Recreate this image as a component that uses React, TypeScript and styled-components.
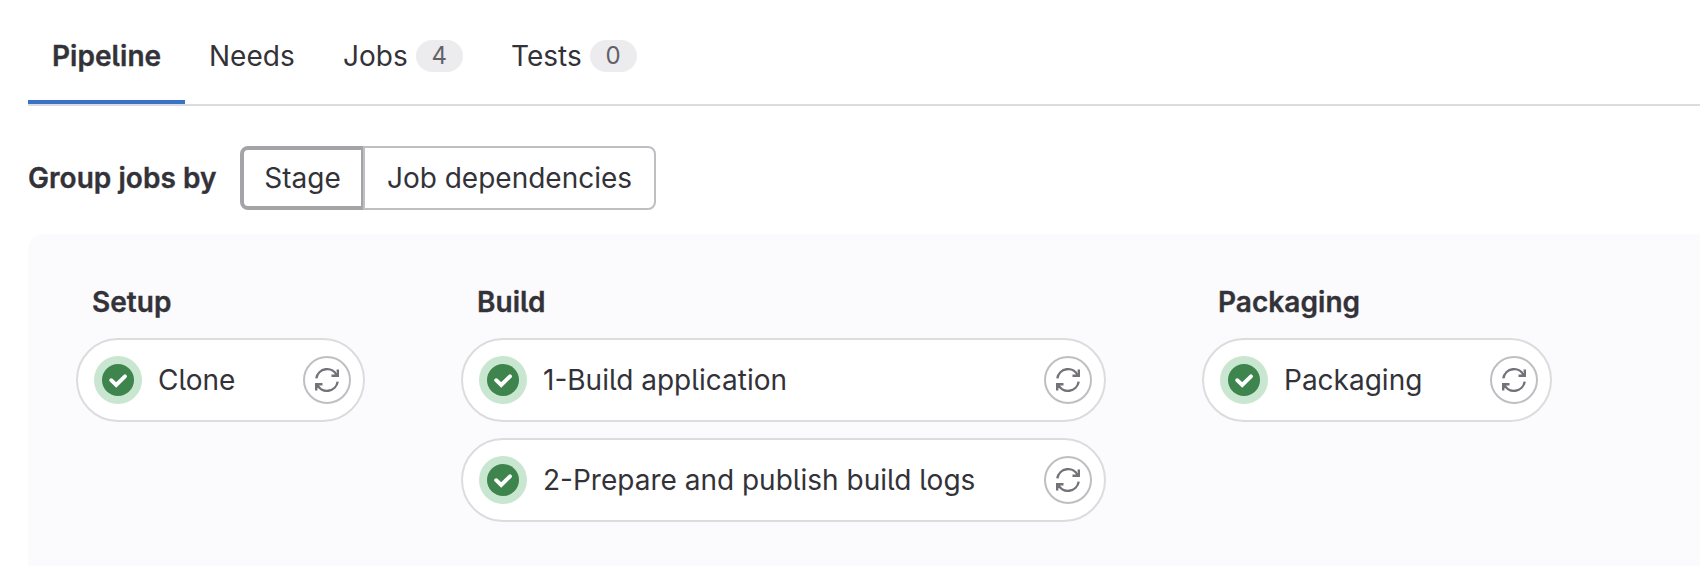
import React from 'react';
import styled, { createGlobalStyle } from 'styled-components';

const GlobalStyle = createGlobalStyle`
  * { box-sizing: border-box; }
  html, body { margin: 0; background: #fff; overflow: hidden; }
  body {
    font-family: Inter, "Liberation Sans", sans-serif;
    font-size: 28px;
    line-height: 40px;
    color: #333238;
    font-feature-settings: "cv05";
  }
  button { font: inherit; color: inherit; font-feature-settings: inherit; }
`;

const Page = styled.main`
  width: 1700px;
  height: 566px;
  overflow: hidden;
  display: flex;
  flex-direction: column;
  padding-left: 28px;
`;

const TabList = styled.nav`
  flex: none;
  display: flex;
  height: 106px;
  padding-top: 12px;
  border-bottom: 2px solid #dcdcde;
`;

const Tab = styled.a<{ $active?: boolean; $width: number }>`
  display: flex;
  align-items: center;
  gap: 8px;
  width: ${p => p.$width}px;
  padding: 0 0 0 24px;
  white-space: nowrap;
  font-weight: ${p => (p.$active ? 600 : 400)};
  letter-spacing: ${p => (p.$active ? '0.05px' : 'normal')};
  -webkit-text-stroke: ${p => (p.$active ? '0.35px' : '0')};
  border-bottom: 4px solid ${p => (p.$active ? '#3a72c8' : 'transparent')};
`;

const Badge = styled.span`
  width: 47px;
  height: 32px;
  border-radius: 16px;
  background: #ececef;
  color: #626168;
  font-size: 24px;
  line-height: 32px;
  text-align: center;
`;

const GroupRow = styled.div`
  flex: none;
  display: flex;
  align-items: center;
  height: 64px;
  margin-top: 40px;
`;

const GroupLabel = styled.span`
  width: 212px;
  font-weight: 600;
  letter-spacing: 0.05px;
  -webkit-text-stroke: 0.35px;
  white-space: nowrap;
`;

const Segment = styled.button<{ $selected?: boolean; $width: number }>`
  width: ${p => p.$width}px;
  height: 64px;
  padding: 0;
  background: #fff;
  white-space: nowrap;
  border: ${p => (p.$selected ? '4px solid #a4a3a8' : '2px solid #bfbfc3')};
  border-right-width: 2px;
  border-radius: ${p => (p.$selected ? '8px 0 0 8px' : '0 8px 8px 0')};
`;

const Graph = styled.section`
  flex: 1;
  display: flex;
  gap: 96px;
  margin-top: 24px;
  padding: 48px 0 0 48px;
  border-top-left-radius: 16px;
  background: #fbfafd;
`;

const Stage = styled.div<{ $width: number }>`
  flex: none;
  display: flex;
  flex-direction: column;
  gap: 16px;
  width: ${p => p.$width}px;
`;

const StageTitle = styled.h2`
  margin: 0;
  padding-left: 16px;
  font-size: 28px;
  line-height: 40px;
  font-weight: 600;
  letter-spacing: 0.05px;
  -webkit-text-stroke: 0.35px;
`;

const Job = styled.div`
  display: flex;
  align-items: center;
  height: 84px;
  padding: 0 12px 0 16px;
  border: 2px solid #dcdcde;
  border-radius: 42px;
  background: #fff;
`;

const JobName = styled.span`
  flex: 1;
  padding-left: 16px;
  white-space: nowrap;
`;

const Retry = styled.button`
  display: grid;
  place-items: center;
  width: 48px;
  height: 48px;
  padding: 0;
  border: 2px solid #bfbfc3;
  border-radius: 50%;
  background: #fff;
  color: #737278;
`;

const SuccessIcon = () => (
  <svg width="48" height="48" viewBox="0 0 48 48">
    <circle cx="24" cy="24" r="24" fill="#c9e6d0" />
    <circle cx="24" cy="24" r="16" fill="#3d844d" />
    <path d="M17.2 24.2l5 4.8 8.8-8.7" fill="none" stroke="#fff" strokeWidth="3.9" strokeLinecap="round" />
  </svg>
);

const RetryIcon = () => (
  <svg width="24" height="24" viewBox="0 0 16 16" fill="none" stroke="currentColor" strokeWidth="1.6">
    <path d="M.88 6.9A7.2 7.2 0 0 1 14.63 5.2M15.2 1v4.2H11" />
    <path d="M15.12 9.1A7.2 7.2 0 0 1 1.37 10.8M.8 15v-4.2H5" />
  </svg>
);

const stages = [
  { name: 'Setup', width: 289, jobs: ['Clone'] },
  { name: 'Build', width: 645, jobs: ['1-Build application', '2-Prepare and publish build logs'] },
  { name: 'Packaging', width: 350, jobs: ['Packaging'] },
];

export default function App() {
  return (
    <Page>
      <GlobalStyle />
      <TabList>
        <Tab $active $width={157}>Pipeline</Tab>
        <Tab $width={134}>Needs</Tab>
        <Tab $width={168}>Jobs<Badge>4</Badge></Tab>
        <Tab $width={175}>Tests<Badge>0</Badge></Tab>
      </TabList>
      <GroupRow>
        <GroupLabel>Group jobs by</GroupLabel>
        <Segment $selected $width={123}>Stage</Segment>
        <Segment $width={293}>Job dependencies</Segment>
      </GroupRow>
      <Graph>
        {stages.map(stage => (
          <Stage key={stage.name} $width={stage.width}>
            <StageTitle>{stage.name}</StageTitle>
            {stage.jobs.map(job => (
              <Job key={job}>
                <SuccessIcon />
                <JobName>{job}</JobName>
                <Retry aria-label="Run again"><RetryIcon /></Retry>
              </Job>
            ))}
          </Stage>
        ))}
      </Graph>
    </Page>
  );
}
